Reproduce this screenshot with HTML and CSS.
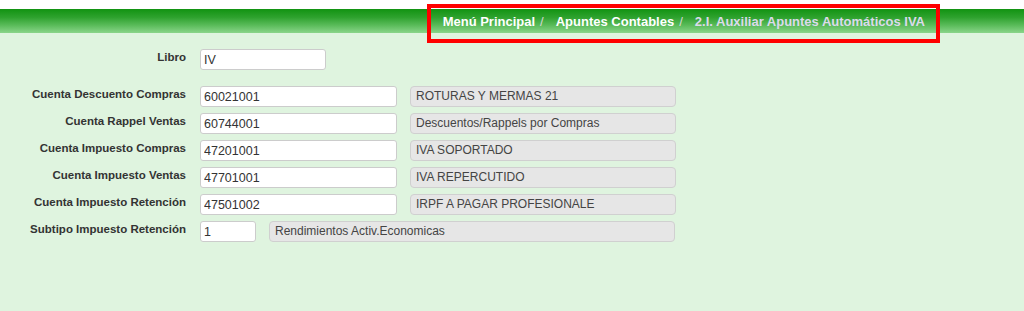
FILE: index.html
```html
<!DOCTYPE html>
<html lang="es">
<head>
  <meta charset="UTF-8">
  <meta name="viewport" content="width=device-width, initial-scale=1.0">
  <title>2.I. Auxiliar Apuntes Automáticos IVA</title>
  <link rel="stylesheet" href="styles.css">
</head>
<body>
  <!-- Top bar with breadcrumb -->
  <div class="header">
    <div class="navbar">
      <div class="breadcrumb">
        <a href="#">Menú Principal</a>
        <span class="sep">/</span>
        <a href="#">Apuntes Contables</a>
        <span class="sep">/</span>
        <span class="current">2.I. Auxiliar Apuntes Automáticos IVA</span>
        <span class="highlight"></span>
      </div>
    </div>
  </div>

  <!-- Form -->
  <div class="content">
    <div class="form-grid">
      <label class="field-label libro">Libro</label>
      <div class="field libro">
        <input class="input w-libro" type="text" value="IV">
      </div>

      <label class="field-label">Cuenta Descuento Compras</label>
      <div class="field">
        <input class="input w-cuenta" type="text" value="60021001">
        <div class="desc w-desc">ROTURAS Y MERMAS 21</div>
      </div>

      <label class="field-label">Cuenta Rappel Ventas</label>
      <div class="field">
        <input class="input w-cuenta" type="text" value="60744001">
        <div class="desc w-desc">Descuentos/Rappels por Compras</div>
      </div>

      <label class="field-label">Cuenta Impuesto Compras</label>
      <div class="field">
        <input class="input w-cuenta" type="text" value="47201001">
        <div class="desc w-desc">IVA SOPORTADO</div>
      </div>

      <label class="field-label">Cuenta Impuesto Ventas</label>
      <div class="field">
        <input class="input w-cuenta" type="text" value="47701001">
        <div class="desc w-desc">IVA REPERCUTIDO</div>
      </div>

      <label class="field-label">Cuenta Impuesto Retención</label>
      <div class="field">
        <input class="input w-cuenta" type="text" value="47501002">
        <div class="desc w-desc">IRPF A PAGAR PROFESIONALE</div>
      </div>

      <label class="field-label">Subtipo Impuesto Retención</label>
      <div class="field">
        <input class="input w-subtipo" type="text" value="1">
        <div class="desc w-desc-long">Rendimientos Activ.Economicas</div>
      </div>
    </div>
  </div>
</body>
</html>
```

FILE: styles.css
```css
html,
body {
  height: 100%;
}

body {
  margin: 0;
  padding: 0;
  font-family: "Liberation Sans", Arial, sans-serif;
  background-color: #dff4df;
  color: #333;
}

/* Header */
.header {
  background-color: #ffffff;
  padding-top: 9px;
}

.navbar {
  height: 24px;
  background: linear-gradient(to bottom, #129312 0%, #2ea22e 35%, #5dbd5d 70%, #8ad58a 100%);
  display: flex;
  justify-content: flex-end;
  padding-right: 99px;
}

.breadcrumb {
  position: relative;
  display: flex;
  align-items: center;
  font-size: 13px;
  font-weight: bold;
  white-space: nowrap;
}

.breadcrumb a {
  color: #ffffff;
  text-decoration: none;
}

.breadcrumb .sep {
  color: #d6d6d6;
  font-weight: normal;
  margin: 0 12px 0 5px;
}

.breadcrumb .current {
  color: #dcdaec;
}

.highlight {
  position: absolute;
  left: -16px;
  right: -15px;
  top: -5px;
  bottom: -10px;
  border: 4px solid #ff0000;
}

/* Form */
.content {
  padding-top: 16px;
}

.form-grid {
  display: grid;
  grid-template-columns: 186px auto;
  column-gap: 14px;
  row-gap: 6px;
}

.field-label {
  text-align: right;
  font-size: 11.5px;
  font-weight: bold;
  line-height: 17px;
  color: #333;
}

.field {
  display: flex;
  gap: 13px;
}

.field.libro,
.field-label.libro {
  margin-bottom: 10px;
}

.input {
  box-sizing: border-box;
  height: 21px;
  margin: 0;
  padding: 0 3px;
  border: 1px solid #cccccc;
  border-radius: 3px;
  background-color: #ffffff;
  font-family: "Liberation Sans", Arial, sans-serif;
  font-size: 12.5px;
  color: #333;
}

.desc {
  box-sizing: border-box;
  height: 21px;
  padding: 0 5px;
  border: 1px solid #d0d0d0;
  border-radius: 4px;
  background-color: #e6e6e6;
  font-size: 12px;
  line-height: 19px;
  color: #444;
}

.w-libro {
  width: 126px;
}

.w-cuenta {
  width: 197px;
}

.w-subtipo {
  width: 56px;
}

.w-desc {
  width: 266px;
}

.w-desc-long {
  width: 406px;
}
```
